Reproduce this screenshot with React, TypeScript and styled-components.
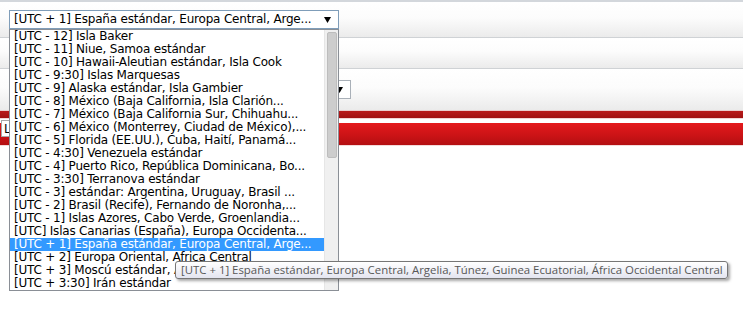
import React from "react";
import styled, { createGlobalStyle } from "styled-components";

const Global = createGlobalStyle`
  html, body { margin: 0; padding: 0; background: #ffffff; }
  body { font-family: "DejaVu Sans", Verdana, sans-serif; }
  * { box-sizing: border-box; }
`;

const Page = styled.div`
  position: relative;
  width: 743px;
  height: 322px;
  overflow: hidden;
  border-top: 2px solid #d3d7dc;
  background: #ffffff;
`;

const FormRow = styled.div<{ $h: number; $line?: string }>`
  height: ${(p) => p.$h + 1}px;
  display: flex;
  align-items: center;
  padding-left: 9px;
  background: linear-gradient(to bottom, #ffffff 0%, #fcfcfc 45%, #ebebeb 100%);
  border-bottom: 1px solid ${(p) => p.$line || "#cfd2d5"};
`;

const SelectBox = styled.div<{ $w: number; $ml?: number; $focus?: boolean }>`
  width: ${(p) => p.$w}px;
  height: 19px;
  margin-left: ${(p) => p.$ml || 0}px;
  border: 1px solid ${(p) => (p.$focus ? "#7f9db9" : "#a9b0b8")};
  background: #ffffff;
  display: flex;
  align-items: center;
  padding: 0 7px 0 4px;
  font-size: 12px;
  letter-spacing: -0.2px;
  color: #000000;
  white-space: nowrap;
  overflow: hidden;
`;

const SelectText = styled.span`
  flex: 1;
  overflow: hidden;
  line-height: 17px;
`;

const Arrow = styled.svg`
  flex: none;
  width: 7px;
  height: 6px;
`;

const DarkStrip = styled.div`
  height: 8px;
  background: linear-gradient(to bottom, #b81b1b, #a11212);
  border-bottom: 1px solid #f2d6d6;
`;

const ActionBand = styled.div`
  height: 27px;
  padding-top: 1px;
  padding-left: 1px;
  background: linear-gradient(
    to bottom,
    #ffffff 0px,
    #ffffff 4px,
    #e41a1c 4px,
    #cc1316 16px,
    #b30f12 26px,
    #f3dada 26px
  );
`;

const BandButton = styled.button`
  height: 17px;
  padding: 0 2px;
  border: 1px solid #a8a8a8;
  background: #ffffff;
  font-family: "DejaVu Sans", Verdana, sans-serif;
  font-size: 12px;
  line-height: 14px;
  color: #000;
  display: block;
`;

const DropList = styled.div`
  position: absolute;
  left: 9px;
  top: 27px;
  width: 330px;
  height: 262px;
  border: 1px solid #8a8f96;
  background: #ffffff;
  display: flex;
`;

const Options = styled.div`
  flex: 1;
  overflow: hidden;
`;

const Option = styled.div<{ $sel?: boolean }>`
  height: 13px;
  line-height: 13px;
  padding-left: 4px;
  font-size: 12px;
  letter-spacing: -0.2px;
  white-space: nowrap;
  overflow: hidden;
  color: ${(p) => (p.$sel ? "#ffffff" : "#000000")};
  background: ${(p) => (p.$sel ? "#3399ff" : "transparent")};
`;

const ScrollTrack = styled.div`
  width: 14px;
  flex: none;
  background: #f0f0f0;
  border-left: 1px solid #e6e6e6;
  padding: 2px 1px 0 2px;
`;

const Thumb = styled.div`
  width: 10px;
  height: 126px;
  background: #cdcdcd;
  border: 1px solid #bdbdbd;
  border-radius: 2px;
`;

const Tooltip = styled.div`
  position: absolute;
  left: 175px;
  top: 259px;
  height: 18px;
  padding: 0 4px 0 5px;
  border: 1px solid #767676;
  border-radius: 3px;
  background: linear-gradient(to bottom, #ffffff, #e4e5f0);
  box-shadow: 2px 2px 3px rgba(0, 0, 0, 0.35);
  font-family: "Open Sans", "Noto Sans", sans-serif;
  font-size: 11.4px;
  line-height: 16px;
  color: #575757;
  white-space: nowrap;
`;

const zones = [
  "[UTC - 12] Isla Baker",
  "[UTC - 11] Niue, Samoa estándar",
  "[UTC - 10] Hawaii-Aleutian estándar, Isla Cook",
  "[UTC - 9:30] Islas Marquesas",
  "[UTC - 9] Alaska estándar, Isla Gambier",
  "[UTC - 8] México (Baja California, Isla Clarión...",
  "[UTC - 7] México (Baja California Sur, Chihuahu...",
  "[UTC - 6] México (Monterrey, Ciudad de México),...",
  "[UTC - 5] Florida (EE.UU.), Cuba, Haití, Panamá...",
  "[UTC - 4:30] Venezuela estándar",
  "[UTC - 4] Puerto Rico, República Dominicana, Bo...",
  "[UTC - 3:30] Terranova estándar",
  "[UTC - 3] estándar: Argentina, Uruguay, Brasil ...",
  "[UTC - 2] Brasil (Recife), Fernando de Noronha,...",
  "[UTC - 1] Islas Azores, Cabo Verde, Groenlandia...",
  "[UTC] Islas Canarias (España), Europa Occidenta...",
  "[UTC + 1] España estándar, Europa Central, Arge...",
  "[UTC + 2] Europa Oriental, África Central",
  "[UTC + 3] Moscú estándar, Arabia Saudita, Irak...",
  "[UTC + 3:30] Irán estándar",
];

const SELECTED = 16;

const DownArrow = () => (
  <Arrow viewBox="0 0 7 6">
    <path d="M0 0 H7 L3.5 6 Z" fill="#000" />
  </Arrow>
);

export default function App() {
  return (
    <>
      <Global />
      <Page>
        <FormRow $h={35}>
          <SelectBox $w={330} $focus>
            <SelectText>{zones[SELECTED]}</SelectText>
            <DownArrow />
          </SelectBox>
        </FormRow>
        <FormRow $h={30} />
        <FormRow $h={41} $line="#e9cfcf">
          <SelectBox $w={153} $ml={189}>
            <SelectText>[UTC + 1]</SelectText>
            <DownArrow />
          </SelectBox>
        </FormRow>
        <DarkStrip />
        <ActionBand>
          <BandButton>Listo</BandButton>
        </ActionBand>

        <DropList>
          <Options>
            {zones.map((z, i) => (
              <Option key={z} $sel={i === SELECTED}>
                {z}
              </Option>
            ))}
          </Options>
          <ScrollTrack>
            <Thumb />
          </ScrollTrack>
        </DropList>

        <Tooltip>
          [UTC + 1] España estándar, Europa Central, Argelia, Túnez, Guinea Ecuatorial, África Occidental Central
        </Tooltip>
      </Page>
    </>
  );
}
